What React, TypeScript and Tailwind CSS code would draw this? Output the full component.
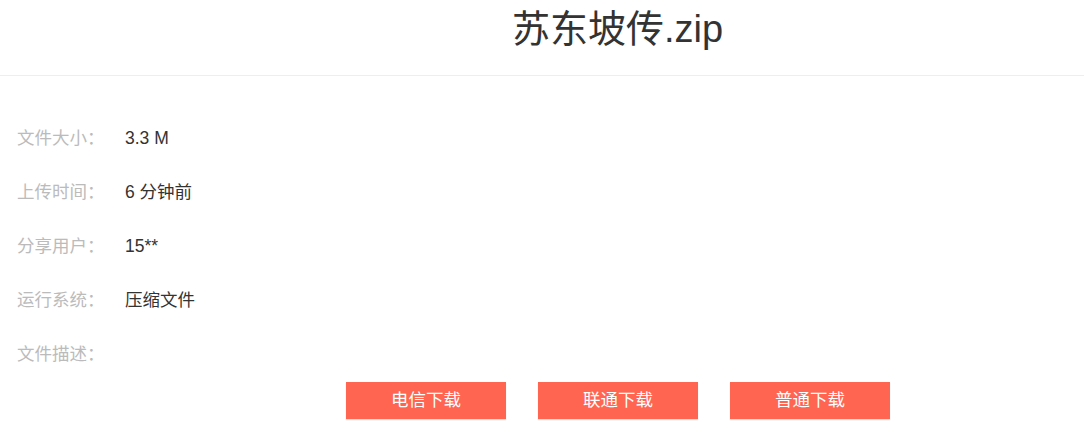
import React from "react";

const rows: [string, string][] = [
  ["文件大小：", "3.3 M"],
  ["上传时间：", "6 分钟前"],
  ["分享用户：", "15**"],
  ["运行系统：", "压缩文件"],
  ["文件描述：", ""],
];

export default function App() {
  return (
    <div
      className="w-[1084px] h-[441px] bg-white overflow-hidden"
      style={{ fontFamily: '"Liberation Sans", "Noto Sans CJK SC", sans-serif' }}
    >
      <div className="h-[76px] border-b border-[#eeeeee] flex justify-center pl-[151px]">
        <h1 className="text-[38px] leading-[58px] text-[#333333] font-normal">苏东坡传.zip</h1>
      </div>
      <div className="pt-[50px] pl-[17px] flex flex-col">
        {rows.map(([k, v]) => (
          <div key={k} className="h-[54px] flex items-start text-[17.5px] leading-[24px]">
            <span className="w-[108px] text-[#bbbbbb]">{k}</span>
            <span className="text-[#333333]">{v}</span>
          </div>
        ))}
      </div>
      <div className="-mt-[14px] flex justify-center pl-[152px] gap-[32px]">
        {["电信下载", "联通下载", "普通下载"].map((t) => (
          <div
            key={t}
            className="w-[160px] h-[37px] bg-[#ff6551] text-white text-[17.5px] flex items-center justify-center shadow-[0_1px_1px_rgba(0,0,0,0.12)]"
          >
            {t}
          </div>
        ))}
      </div>
    </div>
  );
}
